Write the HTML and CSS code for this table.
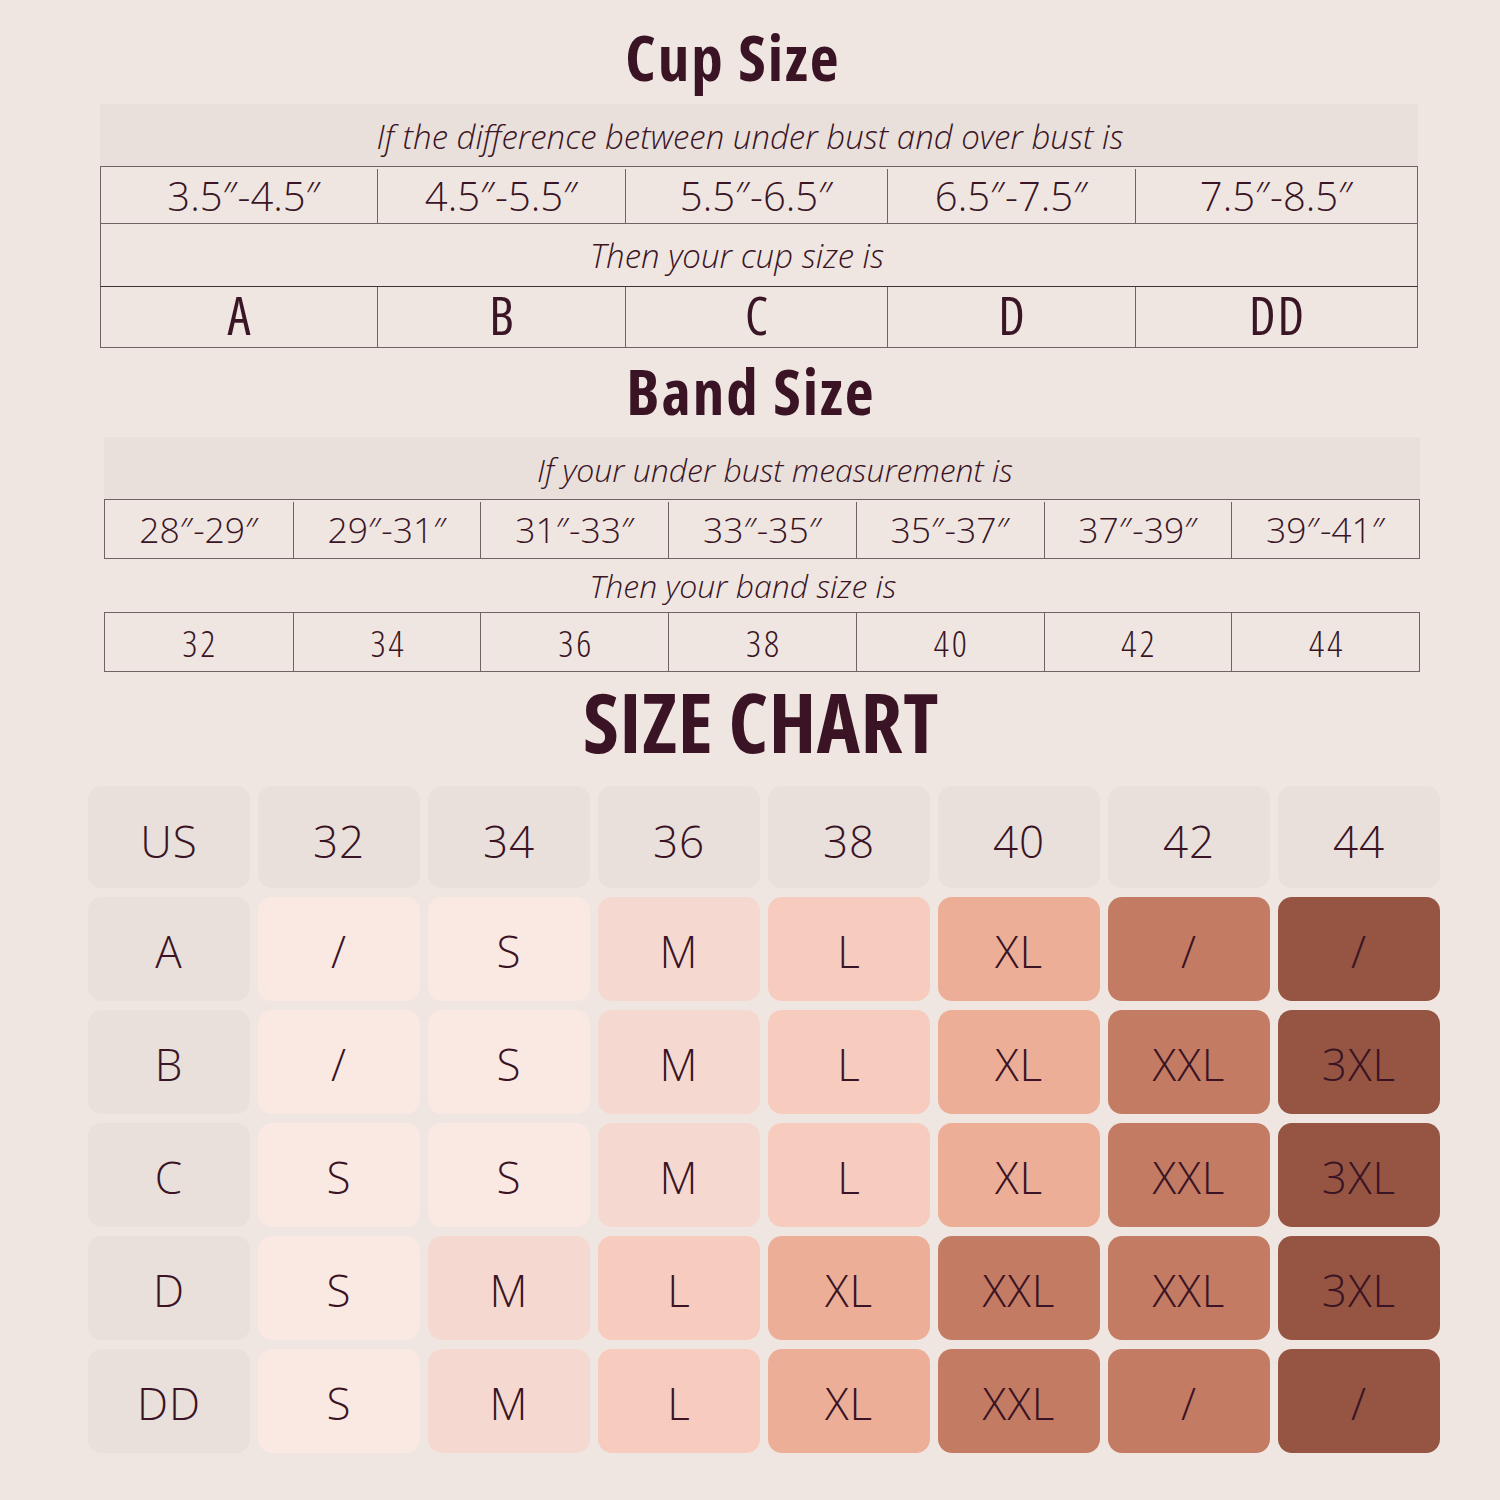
FILE: index.html
```html
<!DOCTYPE html>
<html>
<head>
<meta charset="utf-8">
<link rel="stylesheet" href="styles.css">
</head>
<body>
<div class="page">
  <h1 class="title title-cup">Cup Size</h1>
  <div class="cup-table">
    <div class="band-head head-cup">If the difference between under bust and over bust is</div>
    <div class="row cup-row ranges">
      <div class="cell">3.5″-4.5″</div>
      <div class="cell">4.5″-5.5″</div>
      <div class="cell">5.5″-6.5″</div>
      <div class="cell">6.5″-7.5″</div>
      <div class="cell">7.5″-8.5″</div>
    </div>
    <div class="then-row boxed">Then your cup size is</div>
    <div class="row cup-row letters">
      <div class="cell">A</div>
      <div class="cell">B</div>
      <div class="cell">C</div>
      <div class="cell">D</div>
      <div class="cell">DD</div>
    </div>
  </div>

  <h1 class="title title-band">Band Size</h1>
  <div class="band-table">
    <div class="band-head head-band">If your under bust measurement is</div>
    <div class="row band-row ranges">
      <div class="cell">28″-29″</div>
      <div class="cell">29″-31″</div>
      <div class="cell">31″-33″</div>
      <div class="cell">33″-35″</div>
      <div class="cell">35″-37″</div>
      <div class="cell">37″-39″</div>
      <div class="cell">39″-41″</div>
    </div>
    <div class="then-row plain">Then your band size is</div>
    <div class="row band-row nums">
      <div class="cell">32</div>
      <div class="cell">34</div>
      <div class="cell">36</div>
      <div class="cell">38</div>
      <div class="cell">40</div>
      <div class="cell">42</div>
      <div class="cell">44</div>
    </div>
  </div>

  <h1 class="title title-chart">SIZE CHART</h1>
  <div class="chart">
    <div class="tile hd top">US</div>
    <div class="tile hd top">32</div>
    <div class="tile hd top">34</div>
    <div class="tile hd top">36</div>
    <div class="tile hd top">38</div>
    <div class="tile hd top">40</div>
    <div class="tile hd top">42</div>
    <div class="tile hd top">44</div>

    <div class="tile hd">A</div>
    <div class="tile c1">/</div>
    <div class="tile c1">S</div>
    <div class="tile c2">M</div>
    <div class="tile c3">L</div>
    <div class="tile c4">XL</div>
    <div class="tile c5">/</div>
    <div class="tile c6">/</div>

    <div class="tile hd">B</div>
    <div class="tile c1">/</div>
    <div class="tile c1">S</div>
    <div class="tile c2">M</div>
    <div class="tile c3">L</div>
    <div class="tile c4">XL</div>
    <div class="tile c5">XXL</div>
    <div class="tile c6">3XL</div>

    <div class="tile hd">C</div>
    <div class="tile c1">S</div>
    <div class="tile c1">S</div>
    <div class="tile c2">M</div>
    <div class="tile c3">L</div>
    <div class="tile c4">XL</div>
    <div class="tile c5">XXL</div>
    <div class="tile c6">3XL</div>

    <div class="tile hd">D</div>
    <div class="tile c1">S</div>
    <div class="tile c2">M</div>
    <div class="tile c3">L</div>
    <div class="tile c4">XL</div>
    <div class="tile c5">XXL</div>
    <div class="tile c5">XXL</div>
    <div class="tile c6">3XL</div>

    <div class="tile hd">DD</div>
    <div class="tile c1">S</div>
    <div class="tile c2">M</div>
    <div class="tile c3">L</div>
    <div class="tile c4">XL</div>
    <div class="tile c5">XXL</div>
    <div class="tile c5">/</div>
    <div class="tile c6">/</div>
  </div>
</div>
</body>
</html>
```

FILE: styles.css
```css
* { box-sizing: border-box; }
html, body {
  margin: 0;
  padding: 0;
  background: #efe6e2;
}
body {
  width: 1500px;
  height: 1500px;
  overflow: hidden;
  color: #3a1525;
  font-family: "Open Sans", "DejaVu Sans", sans-serif;
  font-stretch: 75%;
}
.page {
  display: flex;
  flex-direction: column;
}
.title {
  margin: 0;
  font-family: "Open Sans", sans-serif;
  font-stretch: 75%;
  font-weight: 700;
  color: #3a1424;
  text-align: center;
  line-height: 1;
}
.title-cup {
  font-size: 63px;
  letter-spacing: 2px;
  height: 104px;
  padding-top: 25px;
  width: 1466px;
}
.title-band {
  font-size: 63px;
  letter-spacing: 2px;
  height: 89px;
  padding-top: 11px;
  padding-left: 2px;
}
.title-chart {
  font-size: 82px;
  letter-spacing: 0.6px;
  height: 102px;
  padding-top: 8px;
  padding-left: 22px;
}

.cup-table {
  margin-left: 100px;
  width: 1318px;
}
.band-table {
  margin-left: 104px;
  width: 1316px;
}
.band-head {
  background: #e9dfdb;
  height: 62px;
  display: flex;
  align-items: center;
  justify-content: center;
  font-style: italic;
  font-weight: 300;
  font-size: 33px;
  font-stretch: 100%;
  padding-top: 2px;
}
.head-cup { padding-right: 18px; }
.head-band { padding-left: 26px; font-size: 32px; }
.row {
  display: grid;
  border: 1px solid #6f6262;
  line-height: 1;
}
.cup-row {
  grid-template-columns: 276px 248px 262px 248px 1fr;
}
.band-row {
  grid-template-columns: repeat(7, 1fr);
}
.cell {
  display: flex;
  align-items: center;
  justify-content: center;
  border-left: 1px solid #6f6262;
}
.cell:first-child { border-left: none; }

.cup-row.ranges {
  height: 58px;
  font-size: 40px;
  font-weight: 300;
  font-stretch: 100%;
  padding-top: 2px;
}
.cup-row.ranges .cell:first-child { padding-left: 10px; }
.then-row {
  display: flex;
  align-items: center;
  justify-content: center;
  font-style: italic;
  font-weight: 300;
  font-size: 33px;
  font-stretch: 100%;
}
.then-row.boxed {
  height: 62px;
  border-left: 1px solid #6f6262;
  border-right: 1px solid #6f6262;
  padding-right: 44px;
}
.cup-row.letters {
  height: 62px;
  font-size: 52px;
  font-weight: 500;
  letter-spacing: 2px;
  border-top: 1px solid #3d3434;
}
.cup-row.letters .cell { padding-left: 2px; padding-bottom: 4px; }
.band-row.ranges {
  height: 60px;
  font-size: 35.5px;
  font-weight: 300;
  font-stretch: 100%;
  padding-top: 2px;
}
.then-row.plain {
  height: 53px;
  font-size: 32px;
  padding-right: 38px;
}
.band-row.nums {
  height: 60px;
  font-size: 37px;
  font-weight: 300;
  letter-spacing: 3px;
}
.band-row.nums .cell { padding-left: 3px; }

.chart {
  margin-left: 88px;
  display: grid;
  grid-template-columns: repeat(8, 162px);
  grid-template-rows: 102px repeat(5, 104px);
  column-gap: 8px;
  row-gap: 9px;
  margin-top: 12px;
}
.tile {
  border-radius: 14px;
  display: flex;
  align-items: center;
  justify-content: center;
  font-size: 44px;
  font-weight: 300;
  font-stretch: 100%;
  letter-spacing: 1px;
  color: #3a1424;
  padding-top: 3px;
}
.tile.top { padding-top: 8px; }
.hd { background: #e9dfdb; }
.c1 { background: #fae9e3; }
.c2 { background: #f5d9d1; }
.c3 { background: #f7cbbe; }
.c4 { background: #edae98; }
.c5 { background: #c47b63; }
.c6 { background: #955542; }
```
